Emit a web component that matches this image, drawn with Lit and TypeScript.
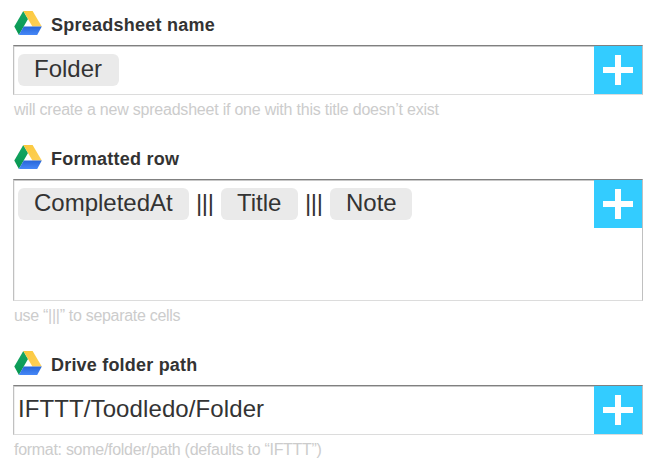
import { LitElement, html, css, svg } from "lit";
import { customElement, property } from "lit/decorators.js";

const driveIcon = svg`
  <svg class="logo" width="28" height="25" viewBox="0 0 28 25">
    <defs>
      <linearGradient id="g" x1="0" y1="0" x2="0" y2="1"><stop offset="0" stop-color="#17a765"/><stop offset="1" stop-color="#069650"/></linearGradient>
      <linearGradient id="y" x1="0" y1="0" x2="1" y2="1"><stop offset="0" stop-color="#fbc83a"/><stop offset="1" stop-color="#fdd05a"/></linearGradient>
      <linearGradient id="b" x1="0" y1="0" x2="0" y2="1"><stop offset="0" stop-color="#2866d8"/><stop offset="1" stop-color="#4688f8"/></linearGradient>
    </defs>
    <path fill="url(#g)" d="M9.3 0L14 8L4.9 24L0.3 15.6Z"/>
    <path fill="url(#y)" d="M9.3 0H18.6L27.8 15.6H18.4Z"/>
    <path fill="url(#b)" d="M9.7 15.6H27.8L23.2 24H4.9Z"/>
  </svg>`;

@customElement("ingredient-chip")
class IngredientChip extends LitElement {
  static styles = css`
    :host {
      display: block;
      box-sizing: border-box;
      height: 32px;
      padding: 0 16px;
      border-radius: 6px;
      background: #eaeaea;
      line-height: 29px;
      text-align: left;
      white-space: nowrap;
    }
  `;
  render() {
    return html`<slot></slot>`;
  }
}

@customElement("action-field")
class ActionField extends LitElement {
  @property() label = "";
  @property() hint = "";

  static styles = css`
    :host { display: block; width: 630px; }
    .head { display: flex; height: 35px; align-items: flex-start; }
    .logo { display: block; margin: 1px 0 0 1px; }
    .label {
      margin-left: 9px;
      font-weight: bold;
      font-size: 18px;
      line-height: 30px;
      letter-spacing: var(--label-spacing, 0.25px);
      color: #333;
      white-space: nowrap;
    }
    .box {
      display: flex;
      box-sizing: border-box;
      height: var(--box-height, 50px);
      border: 1px solid;
      border-color: #808080 #c0c0c0 #dcdcdc #c0c0c0;
      box-shadow: inset 0 1px 0 #c8c8c8, inset 1px 0 0 #f0f0f0;
    }
    .content {
      flex: 1;
      display: flex;
      height: 32px;
      padding: 8px 0 0 4px;
      font-size: 24px;
      line-height: 29px;
      color: #333;
    }
    .add { width: 48px; height: 48px; background: #3cf; }
    .add svg { display: block; }
    .hint {
      margin-top: 5px;
      padding-left: 1px;
      font-size: 16px;
      line-height: 20px;
      letter-spacing: var(--hint-spacing, 0px);
      color: #ccc;
      white-space: nowrap;
    }
  `;

  render() {
    return html`
      <div class="head">${driveIcon}<div class="label">${this.label}</div></div>
      <div class="box">
        <div class="content"><slot></slot></div>
        <div class="add">
          <svg width="48" height="48" viewBox="0 0 48 48">
            <path fill="#fff" d="M21 9h6v12h12v6H27v12h-6V27H9v-6h12z" />
          </svg>
        </div>
      </div>
      <div class="hint">${this.hint}</div>
    `;
  }
}

@customElement("app-root")
class AppRoot extends LitElement {
  static styles = css`
    :host {
      display: flex;
      flex-direction: column;
      gap: 24px;
      box-sizing: border-box;
      width: 667px;
      height: 475px;
      padding: 10px 0 0 13px;
      overflow: hidden;
      background: #fff;
      font-family: "Liberation Sans", Arial, sans-serif;
    }
    .name { --hint-spacing: -0.22px; }
    .row { --box-height: 122px; --hint-spacing: -0.3px; }
    .path { --hint-spacing: -0.29px; --label-spacing: 0.2px; }
    .folder { width: 101px; }
    .completed { width: 171px; }
    .title { width: 77px; }
    .note { width: 82px; }
    .sep { width: 25px; margin-left: 7px; letter-spacing: -0.4px; }
    .value { letter-spacing: 0.1px; }
  `;

  render() {
    return html`
      <action-field class="name" label="Spreadsheet name" hint="will create a new spreadsheet if one with this title doesn’t exist">
        <ingredient-chip class="folder">Folder</ingredient-chip>
      </action-field>
      <action-field class="row" label="Formatted row" hint="use “|||” to separate cells">
        <ingredient-chip class="completed">CompletedAt</ingredient-chip>
        <span class="sep">|||</span>
        <ingredient-chip class="title">Title</ingredient-chip>
        <span class="sep">|||</span>
        <ingredient-chip class="note">Note</ingredient-chip>
      </action-field>
      <action-field class="path" label="Drive folder path" hint="format: some/folder/path (defaults to “IFTTT”)">
        <span class="value">IFTTT/Toodledo/Folder</span>
      </action-field>
    `;
  }
}
